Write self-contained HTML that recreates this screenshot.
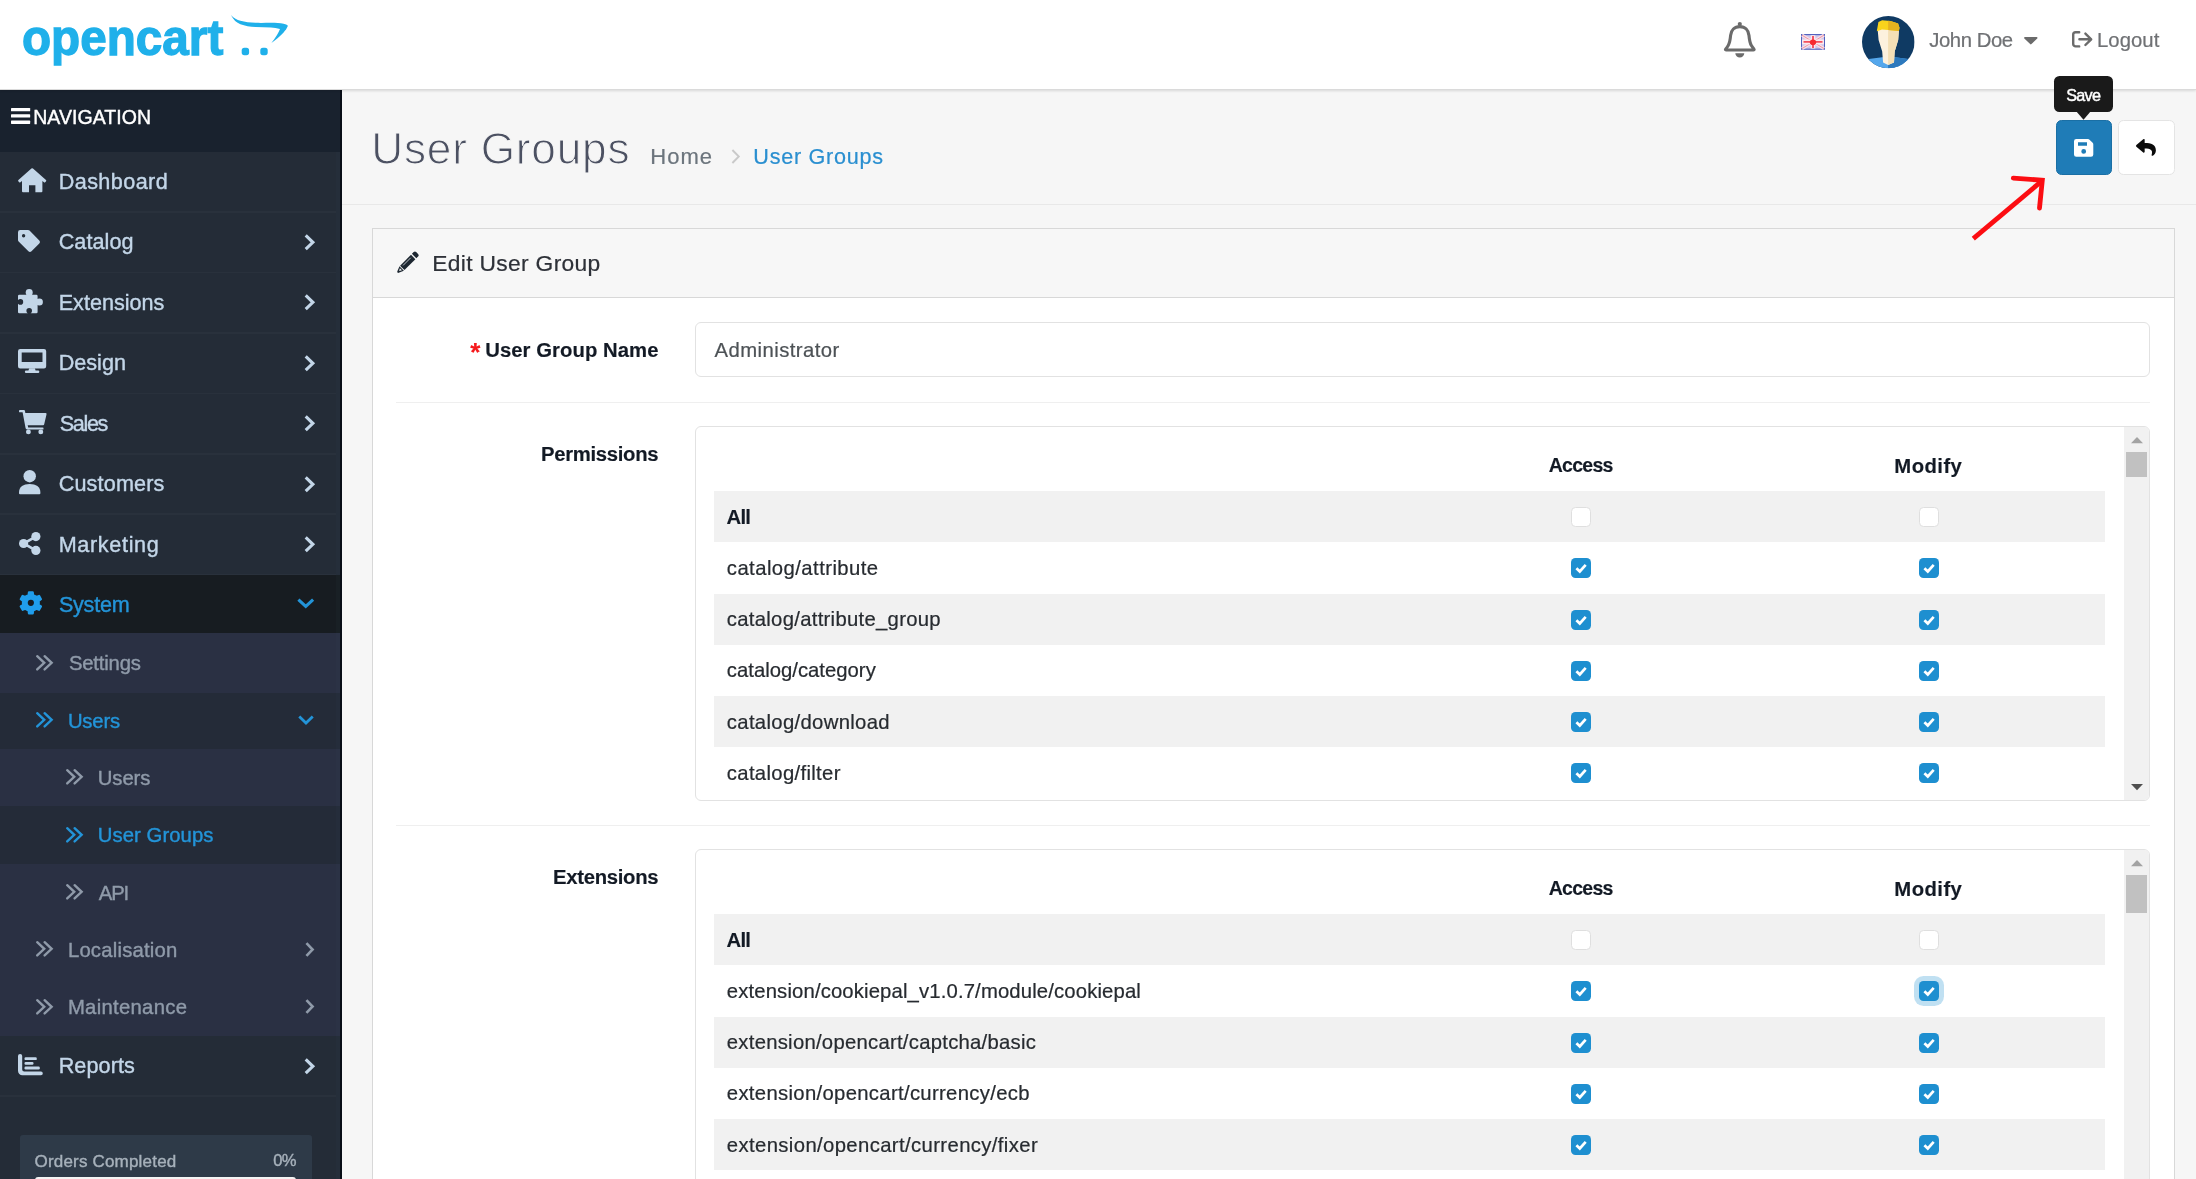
<!DOCTYPE html>
<html lang="en">
<head>
<meta charset="utf-8">
<title>User Groups</title>
<style>
*{box-sizing:border-box;margin:0;padding:0}
html,body{width:2196px;height:1179px;overflow:hidden;background:#f6f6f6;font-family:'Liberation Sans',sans-serif}
#page{position:relative;width:2196px;height:1179px;overflow:hidden}
.a{position:absolute}
.t{position:absolute;white-space:nowrap;line-height:1;font-family:'Liberation Sans',sans-serif}
svg{position:absolute;overflow:visible}
/* header */
#header{left:0;top:0;width:2196px;height:90px;background:#fff;border-bottom:1.4px solid #dadada;box-shadow:0 1px 2.5px rgba(0,0,0,.12);z-index:5}
/* sidebar */
#side{left:0;top:89px;width:342px;height:1090px;background:#242c37}
#nav{left:0;top:1px;width:342px;height:62px;background:#19222e}
.mi{left:0;width:342px;height:60.43px}
.mi i{position:absolute;left:0;right:6px;bottom:-.6px;height:1.8px;background:#29313c}
.sm{left:0;width:342px;background:#2a3043}
.sm.on{background:#242b38}
/* main */
#hline{left:342px;top:204px;width:1854px;height:1px;background:#e8e8e8}
#card{left:372px;top:228px;width:1803px;height:960px;background:#fff;border:1px solid #d8d8d8}
#cardh{left:0;top:0;width:1801px;height:69px;background:#f7f7f7;border-bottom:1px solid #d8d8d8}
.hr{left:396px;width:1754px;height:1px;background:#efefef}
.box{left:695px;width:1455px;background:#fff;border:1px solid #e2e2e2;border-radius:6px}
.stripe{left:714px;width:1391px;height:51.25px;background:#f1f1f1}
.track{left:2124px;width:25px;background:#f1f1f1}
.thumb{left:2126px;width:21px;background:#c1c1c1}
.cb{width:20px;height:20px;border-radius:4.5px;background:#1e8fd0}
.cb.off{background:#fff;border:1px solid #dfdfdf}
.cb.foc{box-shadow:0 0 0 5px rgba(30,143,208,.28)}
</style>
</head>
<body>
<div id="page">

<!-- ===== main area ===== -->
<div id="hline" class="a"></div>
<div id="card" class="a"><div id="cardh" class="a"></div></div>
<div class="a" style="left:695px;top:322px;width:1455px;height:55px;border:1px solid #e2e2e2;border-radius:6px;background:#fff"></div>
<div class="a hr" style="top:402px"></div>
<div class="a hr" style="top:825px"></div>
<div class="a box" style="top:426px;height:374.5px"></div>
<div class="a box" style="top:849px;height:360px"></div>
<div class="a stripe" style="top:491.2px"></div>
<div class="a stripe" style="top:593.7px"></div>
<div class="a stripe" style="top:696.2px"></div>
<div class="a stripe" style="top:914.2px"></div>
<div class="a stripe" style="top:1016.7px"></div>
<div class="a stripe" style="top:1119.2px"></div>
<div class="a track" style="top:427px;height:372.5px;border-radius:0 5px 5px 0"></div>
<div class="a thumb" style="top:452px;height:24.5px"></div>
<svg style="left:2130.5px;top:436.6px" width="12" height="6.2" viewBox="0 0 12 6.2" ><path d="M0 6.2 L6 0 L12 6.2Z" fill="#a3a3a3"/></svg>
<svg style="left:2130.5px;top:784px" width="12" height="6.2" viewBox="0 0 12 6.2" ><path d="M0 0 L6 6.2 L12 0Z" fill="#4f4f4f"/></svg>
<div class="a track" style="top:850px;height:340px;border-radius:0 5px 0 0"></div>
<div class="a thumb" style="top:875px;height:38px"></div>
<svg style="left:2130.5px;top:859.6px" width="12" height="6.2" viewBox="0 0 12 6.2" ><path d="M0 6.2 L6 0 L12 6.2Z" fill="#a3a3a3"/></svg>
<div class="a cb off" style="left:1571px;top:507px"></div>
<div class="a cb off" style="left:1918.5px;top:507px"></div>
<div class="a cb" style="left:1571px;top:558.25px"><svg style="left:0;top:0" width="20" height="20" viewBox="0 0 20 20"><path d="M5.4 10.2 L8.8 13.5 L14.7 6.9" fill="none" stroke="#fff" stroke-width="2.7" stroke-linejoin="miter"/></svg></div>
<div class="a cb" style="left:1918.5px;top:558.25px"><svg style="left:0;top:0" width="20" height="20" viewBox="0 0 20 20"><path d="M5.4 10.2 L8.8 13.5 L14.7 6.9" fill="none" stroke="#fff" stroke-width="2.7" stroke-linejoin="miter"/></svg></div>
<div class="a cb" style="left:1571px;top:609.5px"><svg style="left:0;top:0" width="20" height="20" viewBox="0 0 20 20"><path d="M5.4 10.2 L8.8 13.5 L14.7 6.9" fill="none" stroke="#fff" stroke-width="2.7" stroke-linejoin="miter"/></svg></div>
<div class="a cb" style="left:1918.5px;top:609.5px"><svg style="left:0;top:0" width="20" height="20" viewBox="0 0 20 20"><path d="M5.4 10.2 L8.8 13.5 L14.7 6.9" fill="none" stroke="#fff" stroke-width="2.7" stroke-linejoin="miter"/></svg></div>
<div class="a cb" style="left:1571px;top:660.75px"><svg style="left:0;top:0" width="20" height="20" viewBox="0 0 20 20"><path d="M5.4 10.2 L8.8 13.5 L14.7 6.9" fill="none" stroke="#fff" stroke-width="2.7" stroke-linejoin="miter"/></svg></div>
<div class="a cb" style="left:1918.5px;top:660.75px"><svg style="left:0;top:0" width="20" height="20" viewBox="0 0 20 20"><path d="M5.4 10.2 L8.8 13.5 L14.7 6.9" fill="none" stroke="#fff" stroke-width="2.7" stroke-linejoin="miter"/></svg></div>
<div class="a cb" style="left:1571px;top:712px"><svg style="left:0;top:0" width="20" height="20" viewBox="0 0 20 20"><path d="M5.4 10.2 L8.8 13.5 L14.7 6.9" fill="none" stroke="#fff" stroke-width="2.7" stroke-linejoin="miter"/></svg></div>
<div class="a cb" style="left:1918.5px;top:712px"><svg style="left:0;top:0" width="20" height="20" viewBox="0 0 20 20"><path d="M5.4 10.2 L8.8 13.5 L14.7 6.9" fill="none" stroke="#fff" stroke-width="2.7" stroke-linejoin="miter"/></svg></div>
<div class="a cb" style="left:1571px;top:763.25px"><svg style="left:0;top:0" width="20" height="20" viewBox="0 0 20 20"><path d="M5.4 10.2 L8.8 13.5 L14.7 6.9" fill="none" stroke="#fff" stroke-width="2.7" stroke-linejoin="miter"/></svg></div>
<div class="a cb" style="left:1918.5px;top:763.25px"><svg style="left:0;top:0" width="20" height="20" viewBox="0 0 20 20"><path d="M5.4 10.2 L8.8 13.5 L14.7 6.9" fill="none" stroke="#fff" stroke-width="2.7" stroke-linejoin="miter"/></svg></div>
<div class="a cb off" style="left:1571px;top:930px"></div>
<div class="a cb off" style="left:1918.5px;top:930px"></div>
<div class="a cb" style="left:1571px;top:981.25px"><svg style="left:0;top:0" width="20" height="20" viewBox="0 0 20 20"><path d="M5.4 10.2 L8.8 13.5 L14.7 6.9" fill="none" stroke="#fff" stroke-width="2.7" stroke-linejoin="miter"/></svg></div>
<div class="a cb foc" style="left:1918.5px;top:981.25px"><svg style="left:0;top:0" width="20" height="20" viewBox="0 0 20 20"><path d="M5.4 10.2 L8.8 13.5 L14.7 6.9" fill="none" stroke="#fff" stroke-width="2.7" stroke-linejoin="miter"/></svg></div>
<div class="a cb" style="left:1571px;top:1032.5px"><svg style="left:0;top:0" width="20" height="20" viewBox="0 0 20 20"><path d="M5.4 10.2 L8.8 13.5 L14.7 6.9" fill="none" stroke="#fff" stroke-width="2.7" stroke-linejoin="miter"/></svg></div>
<div class="a cb" style="left:1918.5px;top:1032.5px"><svg style="left:0;top:0" width="20" height="20" viewBox="0 0 20 20"><path d="M5.4 10.2 L8.8 13.5 L14.7 6.9" fill="none" stroke="#fff" stroke-width="2.7" stroke-linejoin="miter"/></svg></div>
<div class="a cb" style="left:1571px;top:1083.75px"><svg style="left:0;top:0" width="20" height="20" viewBox="0 0 20 20"><path d="M5.4 10.2 L8.8 13.5 L14.7 6.9" fill="none" stroke="#fff" stroke-width="2.7" stroke-linejoin="miter"/></svg></div>
<div class="a cb" style="left:1918.5px;top:1083.75px"><svg style="left:0;top:0" width="20" height="20" viewBox="0 0 20 20"><path d="M5.4 10.2 L8.8 13.5 L14.7 6.9" fill="none" stroke="#fff" stroke-width="2.7" stroke-linejoin="miter"/></svg></div>
<div class="a cb" style="left:1571px;top:1135px"><svg style="left:0;top:0" width="20" height="20" viewBox="0 0 20 20"><path d="M5.4 10.2 L8.8 13.5 L14.7 6.9" fill="none" stroke="#fff" stroke-width="2.7" stroke-linejoin="miter"/></svg></div>
<div class="a cb" style="left:1918.5px;top:1135px"><svg style="left:0;top:0" width="20" height="20" viewBox="0 0 20 20"><path d="M5.4 10.2 L8.8 13.5 L14.7 6.9" fill="none" stroke="#fff" stroke-width="2.7" stroke-linejoin="miter"/></svg></div>

<!-- ===== sidebar ===== -->
<div id="side" class="a">
<div id="nav" class="a"></div>
<div class="a mi" style="top:63px;"><i></i></div>
<div class="a mi" style="top:123.43px;"><i></i></div>
<div class="a mi" style="top:183.86px;"><i></i></div>
<div class="a mi" style="top:244.29px;"><i></i></div>
<div class="a mi" style="top:304.72px;"><i></i></div>
<div class="a mi" style="top:365.15px;"><i></i></div>
<div class="a mi" style="top:425.58px;"><i></i></div>
<div class="a mi" style="top:486.01px;background:#171c21;"></div>
<div class="a sm" style="top:544.2px;height:402.6px"></div>
<div class="a sm on" style="top:603.6px;height:56.7px"></div>
<div class="a sm on" style="top:716.8px;height:57.9px"></div>
<div class="a mi" style="top:946.5px;height:61px"><i></i></div>
<div class="a" style="left:19.5px;top:1045.5px;width:292.5px;height:60px;background:#2e3a48;border-radius:3px"></div>
<div class="a" style="left:34.5px;top:1088px;width:261.5px;height:10px;background:#f3f3f3;border-radius:3px 3px 0 0"></div>
<div class="a" style="left:336px;top:63px;width:4px;height:1027px;background:rgba(60,80,100,.07)"></div><div class="a" style="left:340px;top:0;width:2px;height:1090px;background:#090e17"></div>
</div>

<!-- ===== header ===== -->
<div id="header" class="a"></div>
<div style="position:absolute;left:0;top:0;z-index:8"><svg style="left:10.8px;top:108.3px" width="19.2" height="16" viewBox="0 0 19.2 16" ><rect x="0" y="0" width="19.2" height="3.3" rx=".6" fill="#fff"/><rect x="0" y="6.3" width="19.2" height="3.3" rx=".6" fill="#fff"/><rect x="0" y="12.6" width="19.2" height="3.3" rx=".6" fill="#fff"/></svg>
<svg style="left:18.3px;top:167.5px" width="28.4" height="24.2" viewBox="0 0 28.4 24.2" ><g fill="#c3d6e8"><path d="M14.2 .2 a1.2 1.2 0 0 1 .8 .3 L28 12 a.9.9 0 0 1 .1 1.2 l-.9 1 a.9.9 0 0 1 -1.2 .1 L24.4 12.9 V23.2 a1 1 0 0 1-1 1 H17.4 V17.2 H11 V24.2 H5 a1 1 0 0 1-1-1 V12.9 L2.4 14.3 a.9.9 0 0 1-1.2-.1 l-.9-1 a.9.9 0 0 1 .1-1.2 L13.4 .5 a1.2 1.2 0 0 1 .8-.3Z"/></g></svg>
<svg style="left:18px;top:230px" width="22" height="22" viewBox="0 0 22 22" ><path fill="#c3d6e8" fill-rule="evenodd" d="M0 2.2 A2.2 2.2 0 0 1 2.2 0 H10 a2.2 2.2 0 0 1 1.5 .6 l9.8 9.8 a2.2 2.2 0 0 1 0 3.1 l-7.8 7.8 a2.2 2.2 0 0 1 -3.1 0 L.6 11.5 A2.2 2.2 0 0 1 0 10 Z M5.6 7.4 a1.7 1.7 0 1 0 0-3.4 a1.7 1.7 0 0 0 0 3.4z"/></svg>
<svg style="left:18.4px;top:289px" width="25" height="24.3" viewBox="0 0 25 24.3" ><g fill="#c3d6e8"><rect x="0" y="5.7" width="19.6" height="18.6" rx="1.3"/><circle cx="11.2" cy="3.5" r="3.5"/><rect x="9.3" y="3.5" width="3.8" height="3.5"/><circle cx="21.4" cy="12.9" r="3.5"/><rect x="18.5" y="11" width="3" height="3.8"/></g><g fill="#242c37"><circle cx="2.4" cy="12.9" r="2.8"/><rect x="-1" y="11.4" width="3" height="3"/><circle cx="11.2" cy="21.8" r="2.8"/><rect x="9.7" y="22" width="3" height="3"/></g></svg>
<svg style="left:18.3px;top:348.8px" width="28.2" height="24" viewBox="0 0 28.2 24" ><g fill="#c3d6e8"><path fill-rule="evenodd" d="M2.2 0 H26 a2.2 2.2 0 0 1 2.2 2.2 V17.2 a2.2 2.2 0 0 1 -2.2 2.2 H2.2 a2.2 2.2 0 0 1 -2.2-2.2 V2.2 a2.2 2.2 0 0 1 2.2-2.2z M3.7 3.5 V13.1 H24.5 V3.5z"/><path d="M11.3 19.2 h5.6 l.7 2.2 h2.6 a1.1 1.1 0 0 1 1.1 1.1 v.4 a1.1 1.1 0 0 1-1.1 1.1 H8 a1.1 1.1 0 0 1-1.1-1.1 v-.4 a1.1 1.1 0 0 1 1.1-1.1 h2.4z"/></g></svg>
<svg style="left:18.9px;top:410px" width="27.6" height="24.4" viewBox="0 0 27.6 24.4" ><g fill="#c3d6e8"><path d="M.9 0 H4.9 a1.1 1.1 0 0 1 1.1 .9 L6.35 3 H26.4 a1.1 1.1 0 0 1 1.1 1.4 L25.2 14.3 a1.1 1.1 0 0 1-1.1 .9 H8.7 l.45 2.3 H23.4 a1.1 1.1 0 0 1 1.1 1.4 l-.1 .5 H8 a1.6 1.6 0 0 1-1.4-1.2 L3.6 2.3 H.9 A.9.9 0 0 1 0 1.4 V.9 A.9.9 0 0 1 .9 0z"/><circle cx="9.4" cy="21.9" r="2.45"/><circle cx="21.8" cy="21.9" r="2.45"/></g></svg>
<svg style="left:18.8px;top:470.2px" width="21.4" height="24.2" viewBox="0 0 21.4 24.2" ><g fill="#c3d6e8"><circle cx="10.7" cy="6.2" r="6.2"/><path d="M0 22.4 C0 17 4.4 14.1 10.7 14.1 C17 14.1 21.4 17 21.4 22.4 V23.2 a1 1 0 0 1-1 1 H1 a1 1 0 0 1-1-1Z"/></g></svg>
<svg style="left:18.7px;top:532.1px" width="21.6" height="23" viewBox="0 0 21.6 23" ><g fill="#c3d6e8" stroke="#c3d6e8"><path d="M16.8 4.6 L4.6 11.5 L16.8 18.4" fill="none" stroke-width="2.6"/><circle cx="16.9" cy="4.6" r="4.6" stroke="none"/><circle cx="4.6" cy="11.5" r="4.6" stroke="none"/><circle cx="16.9" cy="18.4" r="4.6" stroke="none"/></g></svg>
<svg style="left:18.9px;top:591px" width="23.7" height="23.7" viewBox="0 0 23.7 23.7" ><path d="M9.59 4.07 L9.95 1.27 L13.75 1.27 L14.11 4.07 L17.46 6 L20.06 4.91 L21.96 8.21 L19.72 9.92 L19.72 13.78 L21.96 15.49 L20.06 18.79 L17.46 17.7 L14.11 19.63 L13.75 22.43 L9.95 22.43 L9.59 19.63 L6.24 17.7 L3.64 18.79 L1.74 15.49 L3.98 13.78 L3.98 9.92 L1.74 8.21 L3.64 4.91 L6.24 6Z" fill="#209eec" stroke="#209eec" stroke-width="2.2" stroke-linejoin="round"/><circle cx="11.85" cy="11.85" r="3.1" fill="#171c21"/></svg>
<svg style="left:18.3px;top:1054px" width="24.9" height="21.3" viewBox="0 0 24.9 21.3" ><g fill="#c3d6e8"><path d="M2.1 0 a2.1 2.1 0 0 1 2.1 2.1 V15.6 a2 2 0 0 0 2 2 H23 a1.8 1.8 0 0 1 0 3.6 H4.4 A4.4 4.4 0 0 1 0 16.8 V2.1 A2.1 2.1 0 0 1 2.1 0Z"/><rect x="6.5" y="3.3" width="12.3" height="2.8" rx="1.2"/><rect x="6.5" y="7.9" width="9" height="2.8" rx="1.2"/><rect x="6.5" y="12.5" width="15.3" height="2.9" rx="1.2"/></g></svg>
<svg style="left:303.8px;top:233.93px" width="10.8" height="16.6" viewBox="0 0 10.8 16.6" ><path d="M1.71 1.4 L8.88 8.3 L1.71 15.21" fill="none" stroke="#c3d6e8" stroke-width="3.1" stroke-linejoin="miter" stroke-linecap="butt"/></svg>
<svg style="left:303.8px;top:294.36px" width="10.8" height="16.6" viewBox="0 0 10.8 16.6" ><path d="M1.71 1.4 L8.88 8.3 L1.71 15.21" fill="none" stroke="#c3d6e8" stroke-width="3.1" stroke-linejoin="miter" stroke-linecap="butt"/></svg>
<svg style="left:303.8px;top:354.79px" width="10.8" height="16.6" viewBox="0 0 10.8 16.6" ><path d="M1.71 1.4 L8.88 8.3 L1.71 15.21" fill="none" stroke="#c3d6e8" stroke-width="3.1" stroke-linejoin="miter" stroke-linecap="butt"/></svg>
<svg style="left:303.8px;top:415.22px" width="10.8" height="16.6" viewBox="0 0 10.8 16.6" ><path d="M1.71 1.4 L8.88 8.3 L1.71 15.21" fill="none" stroke="#c3d6e8" stroke-width="3.1" stroke-linejoin="miter" stroke-linecap="butt"/></svg>
<svg style="left:303.8px;top:475.65px" width="10.8" height="16.6" viewBox="0 0 10.8 16.6" ><path d="M1.71 1.4 L8.88 8.3 L1.71 15.21" fill="none" stroke="#c3d6e8" stroke-width="3.1" stroke-linejoin="miter" stroke-linecap="butt"/></svg>
<svg style="left:303.8px;top:536.08px" width="10.8" height="16.6" viewBox="0 0 10.8 16.6" ><path d="M1.71 1.4 L8.88 8.3 L1.71 15.21" fill="none" stroke="#c3d6e8" stroke-width="3.1" stroke-linejoin="miter" stroke-linecap="butt"/></svg>
<svg style="left:303.8px;top:1057.8px" width="10.8" height="16.6" viewBox="0 0 10.8 16.6" ><path d="M1.71 1.4 L8.88 8.3 L1.71 15.21" fill="none" stroke="#c3d6e8" stroke-width="3.1" stroke-linejoin="miter" stroke-linecap="butt"/></svg>
<svg style="left:296.7px;top:598px" width="17.5" height="10.3" viewBox="0 0 17.5 10.3" ><path d="M1.4 1.71 L8.75 8.38 L16.11 1.71" fill="none" stroke="#2394d8" stroke-width="3.1" stroke-linejoin="miter" stroke-linecap="butt"/></svg>
<svg style="left:35.8px;top:654.8px" width="17.2" height="15.6" viewBox="0 0 17.2 15.6" ><path d="M1.2 1.2 L8.24 7.8 L1.2 14.4" fill="none" stroke="#8f9aa9" stroke-width="2.4" stroke-linejoin="miter" stroke-linecap="round"/><path d="M8.6 1.2 L15.64 7.8 L8.6 14.4" fill="none" stroke="#8f9aa9" stroke-width="2.4" stroke-linejoin="miter" stroke-linecap="round"/></svg>
<svg style="left:35.8px;top:712.1px" width="17.2" height="15.6" viewBox="0 0 17.2 15.6" ><path d="M1.2 1.2 L8.24 7.8 L1.2 14.4" fill="none" stroke="#2394d8" stroke-width="2.4" stroke-linejoin="miter" stroke-linecap="round"/><path d="M8.6 1.2 L15.64 7.8 L8.6 14.4" fill="none" stroke="#2394d8" stroke-width="2.4" stroke-linejoin="miter" stroke-linecap="round"/></svg>
<svg style="left:66px;top:769.4px" width="17.2" height="15.6" viewBox="0 0 17.2 15.6" ><path d="M1.2 1.2 L8.24 7.8 L1.2 14.4" fill="none" stroke="#8f9aa9" stroke-width="2.4" stroke-linejoin="miter" stroke-linecap="round"/><path d="M8.6 1.2 L15.64 7.8 L8.6 14.4" fill="none" stroke="#8f9aa9" stroke-width="2.4" stroke-linejoin="miter" stroke-linecap="round"/></svg>
<svg style="left:66px;top:826.7px" width="17.2" height="15.6" viewBox="0 0 17.2 15.6" ><path d="M1.2 1.2 L8.24 7.8 L1.2 14.4" fill="none" stroke="#2394d8" stroke-width="2.4" stroke-linejoin="miter" stroke-linecap="round"/><path d="M8.6 1.2 L15.64 7.8 L8.6 14.4" fill="none" stroke="#2394d8" stroke-width="2.4" stroke-linejoin="miter" stroke-linecap="round"/></svg>
<svg style="left:66px;top:884px" width="17.2" height="15.6" viewBox="0 0 17.2 15.6" ><path d="M1.2 1.2 L8.24 7.8 L1.2 14.4" fill="none" stroke="#8f9aa9" stroke-width="2.4" stroke-linejoin="miter" stroke-linecap="round"/><path d="M8.6 1.2 L15.64 7.8 L8.6 14.4" fill="none" stroke="#8f9aa9" stroke-width="2.4" stroke-linejoin="miter" stroke-linecap="round"/></svg>
<svg style="left:35.8px;top:941.3px" width="17.2" height="15.6" viewBox="0 0 17.2 15.6" ><path d="M1.2 1.2 L8.24 7.8 L1.2 14.4" fill="none" stroke="#8f9aa9" stroke-width="2.4" stroke-linejoin="miter" stroke-linecap="round"/><path d="M8.6 1.2 L15.64 7.8 L8.6 14.4" fill="none" stroke="#8f9aa9" stroke-width="2.4" stroke-linejoin="miter" stroke-linecap="round"/></svg>
<svg style="left:35.8px;top:998.6px" width="17.2" height="15.6" viewBox="0 0 17.2 15.6" ><path d="M1.2 1.2 L8.24 7.8 L1.2 14.4" fill="none" stroke="#8f9aa9" stroke-width="2.4" stroke-linejoin="miter" stroke-linecap="round"/><path d="M8.6 1.2 L15.64 7.8 L8.6 14.4" fill="none" stroke="#8f9aa9" stroke-width="2.4" stroke-linejoin="miter" stroke-linecap="round"/></svg>
<svg style="left:298.3px;top:715px" width="16" height="9.8" viewBox="0 0 16 9.8" ><path d="M1.26 1.54 L8 8.06 L14.74 1.54" fill="none" stroke="#2394d8" stroke-width="2.8" stroke-linejoin="miter" stroke-linecap="butt"/></svg>
<svg style="left:304.7px;top:942px" width="9.2" height="15" viewBox="0 0 9.2 15" ><path d="M1.43 1.17 L7.59 7.5 L1.43 13.83" fill="none" stroke="#8f9aa9" stroke-width="2.6" stroke-linejoin="miter" stroke-linecap="butt"/></svg>
<svg style="left:304.7px;top:999.3px" width="9.2" height="15" viewBox="0 0 9.2 15" ><path d="M1.43 1.17 L7.59 7.5 L1.43 13.83" fill="none" stroke="#8f9aa9" stroke-width="2.6" stroke-linejoin="miter" stroke-linecap="butt"/></svg><svg style="left:220px;top:8px" width="70" height="50" viewBox="0 0 70 50" ><path d="M10.9 7.1 C14 10.5 17 12 20.4 12.7 C25 13.9 30 14.6 35.6 14.8 C41 15 46 14.8 50.9 14.8 C56 14.8 60 15 63.6 15.8 C66.5 16.4 68.2 17.2 67.7 18.3 C66.8 20.5 65.5 22.4 63.6 24.4 C60 28.2 56 31.5 51.4 35.1 C53.5 32.5 55.4 29.8 57 27 C58.2 25 59.2 23 60 20.9 C57 20.2 54 19.8 50.9 19.6 C46 19.3 41 19.3 35.6 19.1 C30 18.8 25 17.9 20.4 16.3 C16.5 14.9 13.5 12 10.9 7.1Z" fill="#1fb0ea"/><rect x="21.7" y="39.8" width="7.4" height="7.4" rx="2.6" fill="#1fb0ea"/><rect x="40.3" y="39.8" width="7.4" height="7.4" rx="2.6" fill="#1fb0ea"/></svg>
<svg style="left:1724.3px;top:21.8px" width="31.6" height="35.4" viewBox="0 0 31.6 35.4" ><circle cx="15.8" cy="2.1" r="2.1" fill="#6b6b6b"/><path d="M15.8 4.65 C10.5 4.65 7 8.5 6.6 13.5 C6.3 17 6 20.5 4.2 23.5 C3.3 25 2.3 26.3 1.6 27.2 C1.2 27.7 1.6 28.05 2.2 28.05 H29.4 C30 28.05 30.4 27.7 30 27.2 C29.3 26.3 28.3 25 27.4 23.5 C25.6 20.5 25.3 17 25 13.5 C24.6 8.5 21.1 4.65 15.8 4.65Z" fill="none" stroke="#6b6b6b" stroke-width="3.1" stroke-linejoin="round"/><path d="M11.3 31.2 h9 a4.5 4.2 0 0 1 -9 0z" fill="#6b6b6b"/></svg>
<svg style="left:1801px;top:34px" width="24" height="15.8" viewBox="0 0 24 15.8" ><rect width="24" height="15.8" fill="#5262bf"/><rect x="1" y="1.2" width="22" height="13.4" fill="#cfc6ea"/><path d="M1 1.2 L23 14.6 M23 1.2 L1 14.6" stroke="#f6dfe8" stroke-width="3.2"/><path d="M1 1.2 L23 14.6 M23 1.2 L1 14.6" stroke="#ee8c9c" stroke-width=".9"/><path d="M12 1.2 V14.6 M1 7.9 H23" stroke="#fbe9ee" stroke-width="4.6"/><path d="M12 2 V14 M2.5 7.9 H21.5" stroke="#f4505f" stroke-width="1.9"/><ellipse cx="12" cy="8.2" rx="3.2" ry="2.8" fill="#f62a30"/></svg>
<svg style="left:1862.3px;top:16px" width="52.6" height="52.2" viewBox="0 0 52.6 52.2" ><defs><clipPath id="av"><ellipse cx="26.3" cy="26.1" rx="26.3" ry="26.1"/></clipPath></defs><g clip-path="url(#av)"><rect width="52.6" height="52.2" fill="#0f3a63"/><path d="M0 52.2 V44 L6.5 43.1 L20.2 41.2 H33.2 L46.2 43.1 L52.6 44 V52.2Z" fill="#55a7ec"/><path d="M26.1 41.2 H33.2 L46.2 43.1 L52.6 44 V52.2 H26.1Z" fill="#2d79bd"/><path d="M15.6 13 H37 L36.2 24 L32.7 35.4 L32 46.6 L26.1 49 L21.1 46.6 L20.2 35.4 L16.6 24Z" fill="#fdf1de"/><path d="M26.1 13 H37 L36.2 24 L32.7 35.4 L32 46.6 L26.1 49Z" fill="#f4dfb6"/><path d="M14.8 15.2 L16.4 6 L20.2 4.3 L28.5 4.9 L36.1 7.5 L37.5 11.8 L36.9 15 L26.1 14 L20 13.4Z" fill="#f9d31c"/><path d="M26.1 4.7 L28.5 4.9 L36.1 7.5 L37.5 11.8 L36.9 15 L26.1 14Z" fill="#e5b21f"/></g></svg>
<svg style="left:2023.8px;top:37.2px" width="13.6" height="7.4" viewBox="0 0 13.6 7.4" ><path d="M1 0 H12.6 a.9.9 0 0 1 .65 1.55 L7.45 7.1 a.95.95 0 0 1-1.3 0 L.35 1.55 A.9.9 0 0 1 1 0Z" fill="#6b6b6b"/></svg>
<svg style="left:2072px;top:31px" width="20.5" height="16.6" viewBox="0 0 20.5 16.6" ><path d="M7.2 1.2 H3.6 A2.4 2.4 0 0 0 1.2 3.6 V13 a2.4 2.4 0 0 0 2.4 2.4 H7.2" fill="none" stroke="#6b6b6b" stroke-width="2.4" stroke-linecap="round"/><path d="M7.4 8.3 H18.6 M13.4 2.6 L19.2 8.3 L13.4 14" fill="none" stroke="#6b6b6b" stroke-width="2.4" stroke-linecap="round" stroke-linejoin="round"/></svg><svg style="left:730.7px;top:149.2px" width="9.3" height="15" viewBox="0 0 9.3 15" ><path d="M1.4 1 L7.8 7.5 L1.4 14" fill="none" stroke="#c9c9c9" stroke-width="1.9"/></svg>
<div class="a" style="left:2054.2px;top:76.2px;width:58.6px;height:35.4px;background:#1a1a1a;border-radius:5.5px"></div>
<svg style="left:2076px;top:111.3px" width="15" height="8.7" viewBox="0 0 15 8.7" ><path d="M0 0 H15 L7.5 8.7Z" fill="#1a1a1a"/></svg>
<div class="a" style="left:2056px;top:120px;width:56px;height:54.5px;background:#1f7cb7;border:1px solid #1a6fa5;border-radius:5.5px"></div>
<svg style="left:2074.1px;top:138.7px" width="19.3" height="17.8" viewBox="0 0 19.3 17.8" ><path fill="#fff" fill-rule="evenodd" d="M2.3 0 H13.9 a2.2 2.2 0 0 1 1.6 .65 L18.65 3.8 a2.2 2.2 0 0 1 .65 1.6 V15.5 a2.3 2.3 0 0 1-2.3 2.3 H2.3 A2.3 2.3 0 0 1 0 15.5 V2.3 A2.3 2.3 0 0 1 2.3 0Z M4 3.3 V6.7 H13 V3.3Z M9.7 10 a2.4 2.4 0 1 0 0 4.8 a2.4 2.4 0 0 0 0-4.8z"/></svg>
<div class="a" style="left:2117.5px;top:120px;width:57px;height:54.5px;background:#fff;border:1px solid #e4e4e4;border-radius:5.5px"></div>
<svg style="left:2136.2px;top:139.2px" width="19.9" height="16.8" viewBox="0 0 20.4 17.2" preserveAspectRatio="none"><path fill="#0b0b0b" d="M.4 6.1 L7.4 .25 a.9.9 0 0 1 1.5 .7 V4.1 C15.6 4.2 20.4 5.6 20.4 11.7 C20.4 14.2 18.8 16.2 17.1 17.05 C16.5 17.4 15.8 16.9 16 16.3 C17.6 11.2 15.1 9.8 8.9 9.7 V13.1 a.9.9 0 0 1-1.5 .7 L.4 7.9 a1.2 1.2 0 0 1 0-1.8Z"/></svg>
<svg style="left:0px;top:0px" width="2196" height="1179" viewBox="0 0 2196 1179" style="left:0;top:0;pointer-events:none"><g fill="none" stroke="#fc0d12" stroke-width="4.8"><path d="M1973.3 238.7 L2040.6 182" stroke-linecap="butt"/><path d="M2013.3 178.2 L2042.3 180.2 L2039.5 208.1" stroke-linecap="round" stroke-linejoin="miter"/></g></svg>
<svg style="left:396.8px;top:250.9px" width="22.4" height="22.4" viewBox="-0.7 -1.3 25.3 25.3" ><g transform="rotate(45 11.5 11.5)" fill="#1d2731"><path d="M8 -1.4 a2 2 0 0 1 2-2 h3 a2 2 0 0 1 2 2 V1.4 H8Z"/><rect x="8" y="2.9" width="7" height="17.4"/><path d="M8 21.3 H15 L12.6 27.2 a1.2 1.2 0 0 1-2.2 0Z"/></g><g transform="rotate(45 11.5 11.5)"><path d="M9.8 22.5 H13.2 L11.5 25.4Z" fill="#f7f7f7"/><path d="M10.2 5.5 V17.8" stroke="#c9cdd1" stroke-width="1"/></g></svg></div>

<!-- ===== texts ===== -->
<div style="position:absolute;left:0;top:0;z-index:10;will-change:transform">
<span class="t" style="left:21.77px;top:12.77px;font-size:50px;color:#1fb0ea;letter-spacing:0px;font-weight:700;transform-origin:0 0;transform:scaleX(0.9532);-webkit-text-stroke:1.3px #1fb0ea;">opencart</span>
<span class="t" style="left:1929.3px;top:29.82px;font-size:20.3px;color:#6f7174;letter-spacing:-0.43px;-webkit-text-stroke:0.22px #6f7174;">John Doe</span>
<span class="t" style="left:2097px;top:29.82px;font-size:20.3px;color:#6f7174;letter-spacing:0.06px;-webkit-text-stroke:0.22px #6f7174;">Logout</span>
<span class="t" style="left:33.2px;top:107.69px;font-size:19.5px;color:#ffffff;letter-spacing:0.06px;-webkit-text-stroke:0.4px #ffffff;">NAVIGATION</span>
<span class="t" style="left:58.7px;top:171.02px;font-size:21.6px;color:#c3d6e8;letter-spacing:0.42px;-webkit-text-stroke:0.4px #c3d6e8;">Dashboard</span>
<span class="t" style="left:58.7px;top:231.45px;font-size:21.6px;color:#c3d6e8;letter-spacing:0.06px;-webkit-text-stroke:0.4px #c3d6e8;">Catalog</span>
<span class="t" style="left:58.7px;top:291.88px;font-size:21.6px;color:#c3d6e8;letter-spacing:-0px;-webkit-text-stroke:0.4px #c3d6e8;">Extensions</span>
<span class="t" style="left:58.7px;top:352.31px;font-size:21.6px;color:#c3d6e8;letter-spacing:-0px;-webkit-text-stroke:0.4px #c3d6e8;">Design</span>
<span class="t" style="left:59.7px;top:412.74px;font-size:21.6px;color:#c3d6e8;letter-spacing:-1.33px;-webkit-text-stroke:0.4px #c3d6e8;">Sales</span>
<span class="t" style="left:58.7px;top:473.17px;font-size:21.6px;color:#c3d6e8;letter-spacing:0.16px;-webkit-text-stroke:0.4px #c3d6e8;">Customers</span>
<span class="t" style="left:58.7px;top:533.6px;font-size:21.6px;color:#c3d6e8;letter-spacing:0.66px;-webkit-text-stroke:0.4px #c3d6e8;">Marketing</span>
<span class="t" style="left:58.9px;top:594.03px;font-size:21.6px;color:#2394d8;letter-spacing:-0.24px;-webkit-text-stroke:0.4px #2394d8;">System</span>
<span class="t" style="left:58.7px;top:1055.32px;font-size:21.6px;color:#c3d6e8;letter-spacing:0.08px;-webkit-text-stroke:0.4px #c3d6e8;">Reports</span>
<span class="t" style="left:68.9px;top:653.32px;font-size:20.3px;color:#8f9aa9;letter-spacing:-0.18px;-webkit-text-stroke:0.4px #8f9aa9;">Settings</span>
<span class="t" style="left:67.9px;top:710.62px;font-size:20.3px;color:#2394d8;letter-spacing:-0.18px;-webkit-text-stroke:0.4px #2394d8;">Users</span>
<span class="t" style="left:97.8px;top:767.92px;font-size:20.3px;color:#8f9aa9;letter-spacing:-0.08px;-webkit-text-stroke:0.4px #8f9aa9;">Users</span>
<span class="t" style="left:97.8px;top:825.22px;font-size:20.3px;color:#2394d8;letter-spacing:0.07px;-webkit-text-stroke:0.4px #2394d8;">User Groups</span>
<span class="t" style="left:98.8px;top:882.52px;font-size:20.3px;color:#8f9aa9;letter-spacing:-1.13px;-webkit-text-stroke:0.4px #8f9aa9;">API</span>
<span class="t" style="left:67.9px;top:939.82px;font-size:20.3px;color:#8f9aa9;letter-spacing:0.21px;-webkit-text-stroke:0.4px #8f9aa9;">Localisation</span>
<span class="t" style="left:67.9px;top:997.12px;font-size:20.3px;color:#8f9aa9;letter-spacing:0.29px;-webkit-text-stroke:0.4px #8f9aa9;">Maintenance</span>
<span class="t" style="left:34.5px;top:1152.81px;font-size:17px;color:#a7b1bb;letter-spacing:0.19px;-webkit-text-stroke:0.4px #a7b1bb;">Orders Completed</span>
<span class="t" style="left:273.3px;top:1153.15px;font-size:16.6px;color:#a7b1bb;letter-spacing:-0.83px;-webkit-text-stroke:0.4px #a7b1bb;">0%</span>
<span class="t" style="left:371.2px;top:126.78px;font-size:44.2px;color:#4c5162;letter-spacing:0.79px;-webkit-text-stroke:1.1px #f6f6f6;">User Groups</span>
<span class="t" style="left:650.3px;top:145.58px;font-size:22px;color:#6c757d;letter-spacing:0.98px;-webkit-text-stroke:0.22px #6c757d;">Home</span>
<span class="t" style="left:753.3px;top:145.92px;font-size:21.6px;color:#2a8fd0;letter-spacing:0.74px;-webkit-text-stroke:0.22px #2a8fd0;">User Groups</span>
<span class="t" style="left:2066.2px;top:86.59px;font-size:16.2px;color:#ffffff;letter-spacing:-0.73px;-webkit-text-stroke:.45px #fff;">Save</span>
<span class="t" style="left:432.3px;top:252px;font-size:22.8px;color:#2e3138;letter-spacing:0.32px;-webkit-text-stroke:0.22px #2e3138;">Edit User Group</span>
<span class="t" style="left:470.2px;top:338.99px;font-size:26px;color:#f5191c;letter-spacing:0px;-webkit-text-stroke:0.15px #f5191c;font-weight:700;">*</span>
<span class="t" style="left:485.2px;top:339.82px;font-size:20.3px;color:#131a25;letter-spacing:0.06px;-webkit-text-stroke:0.15px #131a25;font-weight:700;">User Group Name</span>
<span class="t" style="left:714.5px;top:339.82px;font-size:20.3px;color:#4d5256;letter-spacing:0.44px;-webkit-text-stroke:0.22px #4d5256;">Administrator</span>
<span class="t" style="left:541px;top:443.52px;font-size:20.3px;color:#131a25;letter-spacing:-0.31px;-webkit-text-stroke:0.15px #131a25;font-weight:700;">Permissions</span>
<span class="t" style="left:553px;top:866.52px;font-size:20.3px;color:#131a25;letter-spacing:-0.3px;-webkit-text-stroke:0.15px #131a25;font-weight:700;">Extensions</span>
<span class="t" style="left:1548.7px;top:456.49px;font-size:19.5px;color:#131a25;letter-spacing:-0.73px;-webkit-text-stroke:0.15px #131a25;font-weight:700;">Access</span>
<span class="t" style="left:1894.3px;top:455.82px;font-size:20.3px;color:#131a25;letter-spacing:0.45px;-webkit-text-stroke:0.15px #131a25;font-weight:700;">Modify</span>
<span class="t" style="left:726.6px;top:506.52px;font-size:20.3px;color:#131a25;letter-spacing:-0.79px;-webkit-text-stroke:0.15px #131a25;font-weight:700;">All</span>
<span class="t" style="left:1548.7px;top:879.49px;font-size:19.5px;color:#131a25;letter-spacing:-0.73px;-webkit-text-stroke:0.15px #131a25;font-weight:700;">Access</span>
<span class="t" style="left:1894.3px;top:878.82px;font-size:20.3px;color:#131a25;letter-spacing:0.45px;-webkit-text-stroke:0.15px #131a25;font-weight:700;">Modify</span>
<span class="t" style="left:726.6px;top:929.52px;font-size:20.3px;color:#131a25;letter-spacing:-0.79px;-webkit-text-stroke:0.15px #131a25;font-weight:700;">All</span>
<span class="t" style="left:726.8px;top:557.82px;font-size:20.3px;color:#272b30;letter-spacing:0.44px;-webkit-text-stroke:0.22px #272b30;">catalog/attribute</span>
<span class="t" style="left:726.8px;top:609.07px;font-size:20.3px;color:#272b30;letter-spacing:0.29px;-webkit-text-stroke:0.22px #272b30;">catalog/attribute_group</span>
<span class="t" style="left:726.8px;top:660.32px;font-size:20.3px;color:#272b30;letter-spacing:0.01px;-webkit-text-stroke:0.22px #272b30;">catalog/category</span>
<span class="t" style="left:726.8px;top:711.57px;font-size:20.3px;color:#272b30;letter-spacing:0.33px;-webkit-text-stroke:0.22px #272b30;">catalog/download</span>
<span class="t" style="left:726.8px;top:762.82px;font-size:20.3px;color:#272b30;letter-spacing:0.33px;-webkit-text-stroke:0.22px #272b30;">catalog/filter</span>
<span class="t" style="left:726.8px;top:980.82px;font-size:20.3px;color:#272b30;letter-spacing:0.14px;-webkit-text-stroke:0.22px #272b30;">extension/cookiepal_v1.0.7/module/cookiepal</span>
<span class="t" style="left:726.8px;top:1032.07px;font-size:20.3px;color:#272b30;letter-spacing:0.26px;-webkit-text-stroke:0.22px #272b30;">extension/opencart/captcha/basic</span>
<span class="t" style="left:726.8px;top:1083.32px;font-size:20.3px;color:#272b30;letter-spacing:0.32px;-webkit-text-stroke:0.22px #272b30;">extension/opencart/currency/ecb</span>
<span class="t" style="left:726.8px;top:1134.57px;font-size:20.3px;color:#272b30;letter-spacing:0.38px;-webkit-text-stroke:0.22px #272b30;">extension/opencart/currency/fixer</span>
</div>
</div>
</body>
</html>
